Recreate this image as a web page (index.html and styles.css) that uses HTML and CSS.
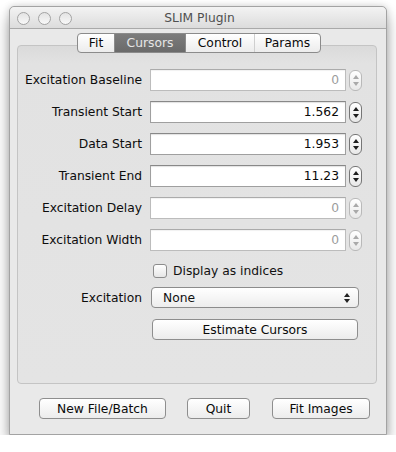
FILE: index.html
```html
<!DOCTYPE html>
<html>
<head>
<meta charset="utf-8">
<link rel="stylesheet" href="styles.css">
</head>
<body>
<div class="window">
  <div class="titlebar">
    <div class="lights"><span class="light"></span><span class="light"></span><span class="light"></span></div>
    <div class="title">SLIM Plugin</div>
  </div>
  <div class="content">
    <div class="tabs">
      <span class="tab t-fit">Fit</span><span class="tab t-cur sel">Cursors</span><span class="tab t-ctl">Control</span><span class="tab t-par">Params</span>
    </div>
    <div class="panel">
      <div class="row">
        <span class="label">Excitation Baseline</span>
        <span class="field dis">0</span>
        <span class="spin dis"></span>
      </div>
      <div class="row">
        <span class="label">Transient Start</span>
        <span class="field">1.562</span>
        <span class="spin"></span>
      </div>
      <div class="row">
        <span class="label">Data Start</span>
        <span class="field">1.953</span>
        <span class="spin"></span>
      </div>
      <div class="row">
        <span class="label">Transient End</span>
        <span class="field">11.23</span>
        <span class="spin"></span>
      </div>
      <div class="row">
        <span class="label">Excitation Delay</span>
        <span class="field dis">0</span>
        <span class="spin dis"></span>
      </div>
      <div class="row">
        <span class="label">Excitation Width</span>
        <span class="field dis">0</span>
        <span class="spin dis"></span>
      </div>
      <div class="row check-row">
        <span class="label"></span>
        <span class="checkbox"></span>
        <span class="check-text">Display as indices</span>
      </div>
      <div class="row select-row">
        <span class="label">Excitation</span>
        <span class="select"><span class="select-text">None</span><span class="select-arrows"></span></span>
      </div>
      <div class="row button-row">
        <span class="label"></span>
        <span class="button estimate">Estimate Cursors</span>
      </div>
    </div>
    <div class="buttons">
      <span class="button b-new">New File/Batch</span>
      <span class="button b-quit">Quit</span>
      <span class="button b-fit">Fit Images</span>
    </div>
  </div>
</div>
</body>
</html>
```
FILE: styles.css
```css
html, body {
  margin: 0;
  padding: 0;
  background: #ffffff;
}
body {
  padding: 6px 0 0 9px;
  font-family: "DejaVu Sans", "Liberation Sans", sans-serif;
  font-size: 12.3px;
  color: #111;
}
.window {
  width: 376px;
  border: 1px solid #a3a3a3;
  border-radius: 5px 5px 0 0;
  background: #e9e9e9;
  box-shadow: 0 10px 16px rgba(0, 0, 0, 0.32), 0 0 7px rgba(0, 0, 0, 0.16);
}
.titlebar {
  height: 21px;
  border-bottom: 1px solid #a9a9a9;
  border-radius: 5px 5px 0 0;
  background: linear-gradient(#f3f3f3, #dcdcdc);
  display: flex;
  align-items: center;
  position: relative;
}
.lights {
  display: flex;
  gap: 8px;
  padding-left: 7px;
  padding-top: 1px;
}
.light {
  width: 11px;
  height: 11px;
  border-radius: 50%;
  border: 1px solid #a3a3a3;
  background: linear-gradient(#e4e4e4, #f8f8f8);
}
.title {
  flex: 1;
  text-align: center;
  color: #505050;
  margin-right: 59px;
  padding-top: 1px;
}
.content {
  padding: 4px 0 15px 0;
}
.tabs {
  display: flex;
  width: max-content;
  margin: 0 auto -8px;
  position: relative;
  z-index: 1;
  height: 18px;
  border: 1px solid #8b8b8b;
  border-radius: 4px;
  background: linear-gradient(#ffffff, #ececec);
  overflow: hidden;
  left: 1px;
}
.tab {
  display: flex;
  align-items: center;
  justify-content: center;
  height: 18px;
  box-sizing: border-box;
  color: #0a0a0a;
}
.t-fit { width: 37px; border-right: 1px solid #8b8b8b; }
.t-cur { width: 70px; }
.t-ctl { width: 70px; border-right: 1px solid #cfcfcf; border-left: 1px solid #8b8b8b; }
.t-par { width: 65px; }
.tab.sel {
  background: linear-gradient(#7c7c7c, #6a6a6a);
  color: #e6e6e6;
}
.panel {
  margin-left: 7px;
  width: 358px;
  height: 314px;
  border: 1px solid #c4c4c4;
  border-radius: 4px;
  background: linear-gradient(#dadada, #e2e2e2 17px, #e4e4e4);
  padding-top: 23px;
  display: flex;
  flex-direction: column;
  gap: 10px;
}
.row {
  display: flex;
  align-items: center;
  height: 22px;
}
.label {
  width: 124px;
  text-align: right;
  margin-right: 8px;
  flex: none;
  color: #0d0d0d;
}
.field {
  width: 196px;
  height: 22px;
  box-sizing: border-box;
  border: 1px solid #9f9f9f;
  border-top-color: #888;
  background: #fff;
  box-shadow: inset 0 1px 1px rgba(0, 0, 0, 0.12);
  text-align: right;
  padding-right: 6px;
  line-height: 20px;
  color: #0a0a0a;
}
.field.dis {
  border-color: #bcbcbc;
  border-top-color: #ababab;
  color: #9b9b9b;
  box-shadow: inset 0 1px 1px rgba(0, 0, 0, 0.06);
}
.spin {
  margin-left: 3px;
  width: 13px;
  height: 21px;
  box-sizing: border-box;
  border: 1px solid #767676;
  border-radius: 6px;
  background: linear-gradient(#ffffff, #e8e8e8);
  display: flex;
  flex-direction: column;
  align-items: center;
  justify-content: space-between;
  padding: 4px 0 4px;
}
.spin::before {
  content: "";
  width: 0;
  height: 0;
  border-left: 3px solid transparent;
  border-right: 3px solid transparent;
  border-bottom: 4px solid #1e1e1e;
}
.spin::after {
  content: "";
  width: 0;
  height: 0;
  border-left: 3px solid transparent;
  border-right: 3px solid transparent;
  border-top: 4px solid #1e1e1e;
}
.spin.dis {
  border-color: #b9b9b9;
}
.spin.dis::before { border-bottom-color: #a9a9a9; }
.spin.dis::after { border-top-color: #a9a9a9; }
.check-row {
  height: 18px;
  margin-top: 1px;
}
.checkbox {
  width: 14px;
  height: 14px;
  box-sizing: border-box;
  margin-left: 3px;
  border: 1px solid #8c8c8c;
  border-radius: 3px;
  background: linear-gradient(#ffffff, #e6e6e6);
}
.check-text {
  margin-left: 6px;
}
.select-row {
  margin-top: -3px;
  height: 21px;
}
.select {
  margin-left: 1px;
  width: 208px;
  height: 21px;
  box-sizing: border-box;
  border: 1px solid #8c8c8c;
  border-radius: 4px;
  background: linear-gradient(#ffffff, #ededed);
  display: flex;
  align-items: center;
  justify-content: space-between;
  padding: 0 8px 0 11px;
}
.select-arrows {
  display: flex;
  flex-direction: column;
  gap: 2px;
}
.select-arrows::before {
  content: "";
  border-left: 3px solid transparent;
  border-right: 3px solid transparent;
  border-bottom: 4px solid #222;
}
.select-arrows::after {
  content: "";
  border-left: 3px solid transparent;
  border-right: 3px solid transparent;
  border-top: 4px solid #222;
}
.button-row {
  margin-top: 1px;
  height: 21px;
}
.button {
  height: 21px;
  box-sizing: border-box;
  border: 1px solid #8e8e8e;
  border-radius: 4px;
  background: linear-gradient(#ffffff, #ececec);
  display: flex;
  align-items: center;
  justify-content: center;
  color: #0a0a0a;
}
.estimate {
  margin-left: 2px;
  width: 206px;
}
.buttons {
  display: flex;
  margin-top: 14px;
  padding-left: 29px;
}
.b-new { width: 127px; }
.b-quit { width: 63px; margin-left: 21px; }
.b-fit { width: 98px; margin-left: 22px; }
```
